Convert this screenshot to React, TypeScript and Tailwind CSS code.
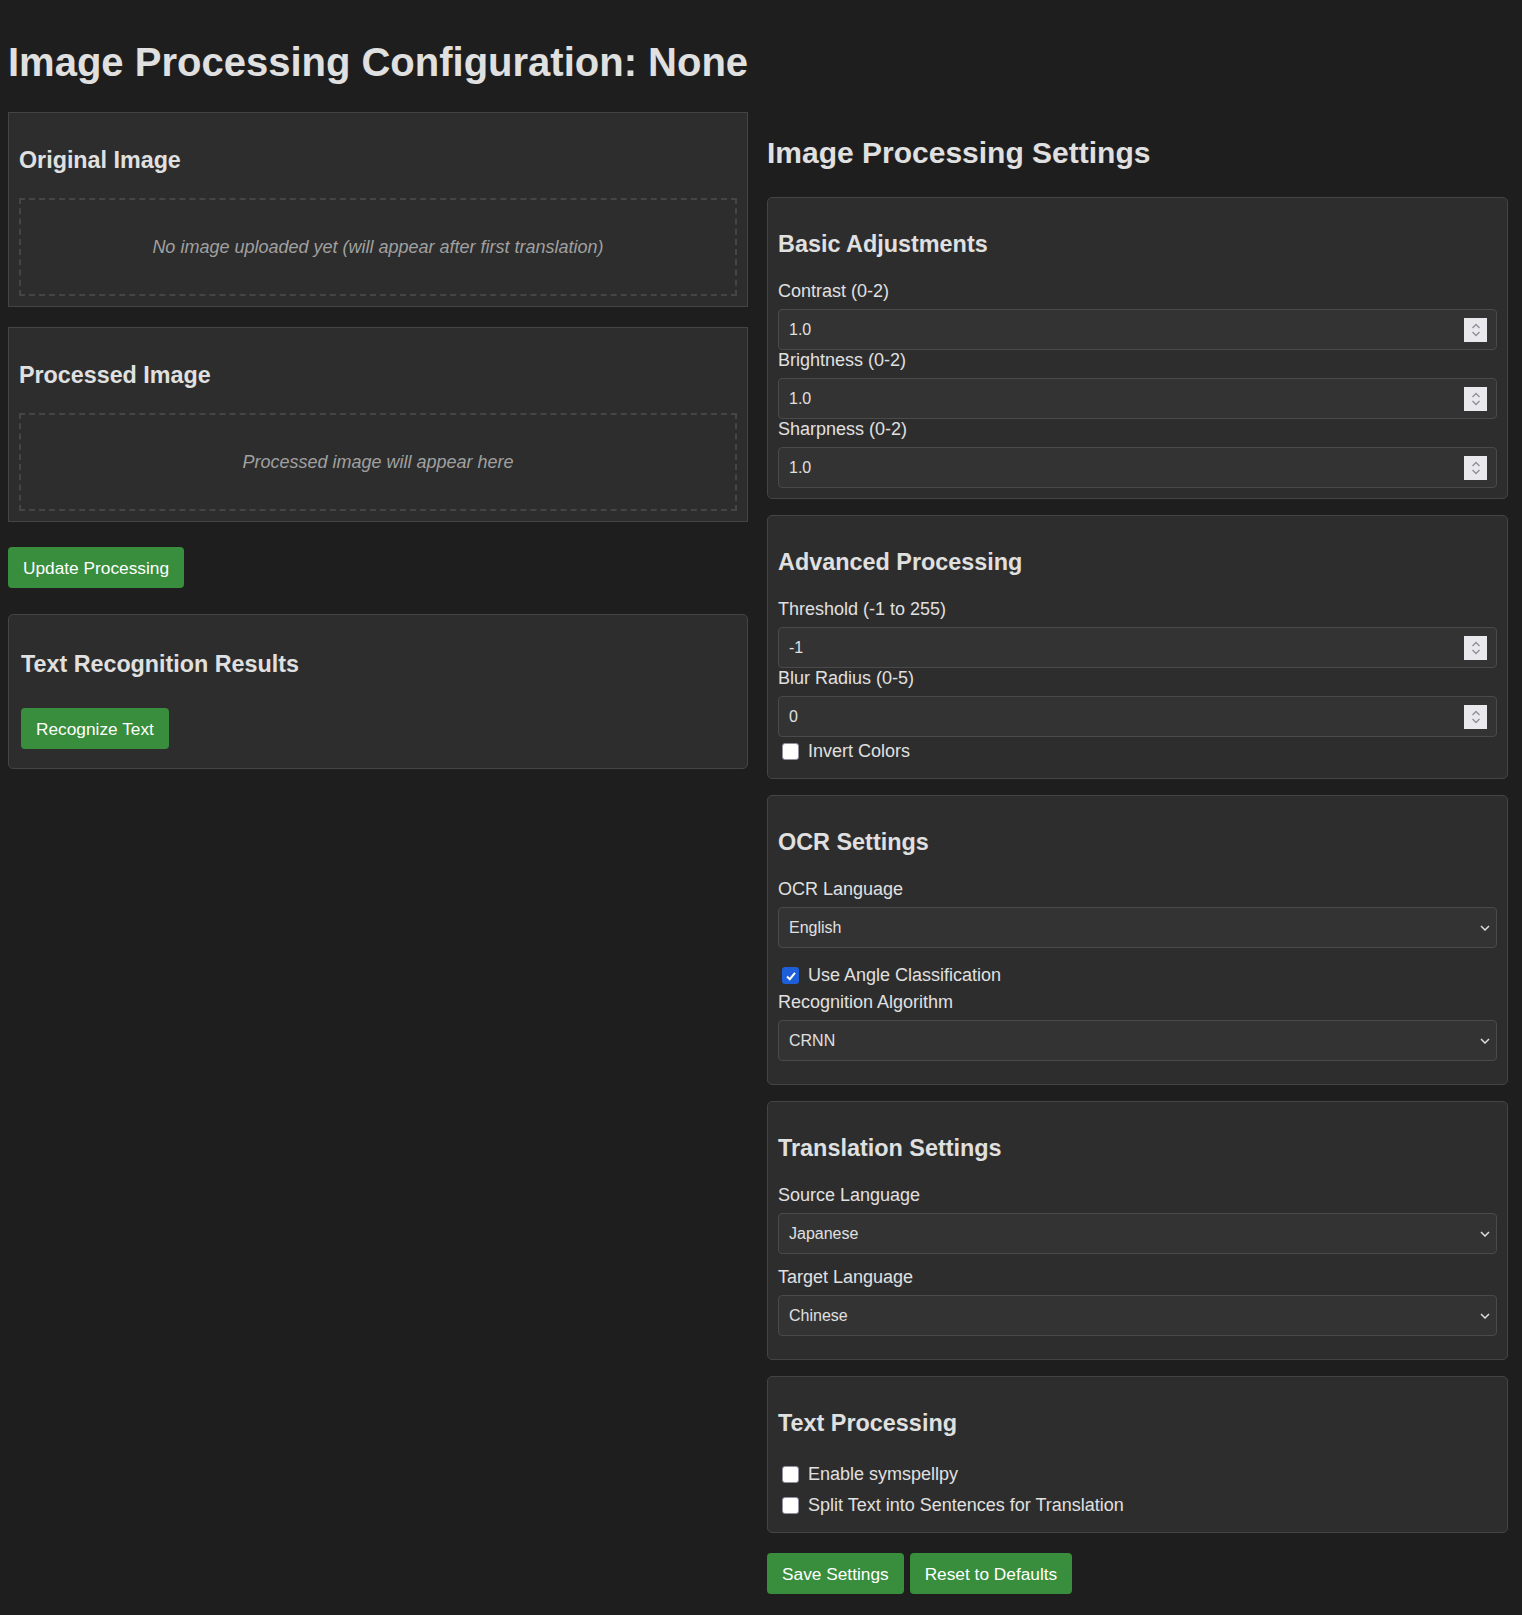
import React from "react";

const LABEL = "block text-[18px] leading-[21px] text-[#e0e0e0]";
const PANEL = "rounded-[5px] border border-[#444444] bg-[#2d2d2d] px-[10px] py-[10px]";
const H3 = "mt-[23px] mb-[23px] text-[23.4px] font-bold leading-[27px] text-[#e0e0e0]";
const BUTTON =
  "h-[41px] rounded-[4px] bg-[#388e3c] px-[15px] text-[17.3px] leading-[20px] text-white";

function Spinner() {
  return (
    <span className="mr-[9px] flex h-[24px] w-[23px] items-center justify-center bg-[#e9e9ed]">
      <svg width="10" height="16" viewBox="0 0 10 16" fill="none">
        <path d="M1.5 6 L5 2.5 L8.5 6" stroke="#8f8f9d" strokeWidth="1.4" />
        <path d="M1.5 10 L5 13.5 L8.5 10" stroke="#8f8f9d" strokeWidth="1.4" />
      </svg>
    </span>
  );
}

function NumberField({ label, value }: { label: string; value: string }) {
  return (
    <div>
      <label className={`${LABEL} mb-[7px]`}>{label}</label>
      <div className="flex h-[41px] items-center rounded-[4px] border border-[#4a4a4a] bg-[#333333]">
        <input
          type="text"
          readOnly
          value={value}
          className="min-w-0 flex-1 bg-transparent pl-[10px] text-[16px] text-[#e0e0e0] outline-none"
        />
        <Spinner />
      </div>
    </div>
  );
}

function SelectField({ label, value }: { label: string; value: string }) {
  return (
    <div className="pb-[13px]">
      <label className={`${LABEL} mb-[7px]`}>{label}</label>
      <div className="relative">
        <select
          defaultValue={value}
          className="h-[41px] w-full appearance-none rounded-[4px] border border-[#4a4a4a] bg-[#333333] pl-[10px] text-[16px] text-[#e0e0e0] outline-none"
        >
          <option>{value}</option>
        </select>
        <svg
          className="pointer-events-none absolute right-[7px] top-1/2 -translate-y-1/2"
          width="10"
          height="6"
          viewBox="0 0 10 6"
          fill="none"
        >
          <path d="M1 1 L5 5 L9 1" stroke="#dddddd" strokeWidth="1.5" />
        </svg>
      </div>
    </div>
  );
}

function Checkbox({ label, checked = false }: { label: string; checked?: boolean }) {
  return (
    <div className="pt-[4px] pb-[6px]">
      <div className="flex h-[21px] items-center gap-[9px] pl-[4px]">
        {checked ? (
          <span className="flex size-[17px] items-center justify-center rounded-[3px] bg-[#1c5fd8]">
            <svg width="12" height="12" viewBox="0 0 12 12" fill="none">
              <path d="M2 6.5 L4.8 9.2 L10 2.8" stroke="#ffffff" strokeWidth="2" />
            </svg>
          </span>
        ) : (
          <span className="size-[17px] rounded-[3px] border border-[#8f8f9d] bg-white" />
        )}
        <span className="text-[18px] leading-[21px] text-[#e0e0e0]">{label}</span>
      </div>
    </div>
  );
}

function ImagePanel({ title, placeholder }: { title: string; placeholder: string }) {
  return (
    <div className="border border-[#444444] bg-[#2d2d2d] p-[10px]">
      <h2 className="mt-[24px] mb-[24px] text-[23.3px] font-bold leading-[27px] text-[#e0e0e0]">
        {title}
      </h2>
      <div className="flex h-[98px] items-center justify-center border-2 border-dashed border-[#454545]">
        <p className="text-[18px] italic text-[#a0a0a0]">{placeholder}</p>
      </div>
    </div>
  );
}

export default function App() {
  return (
    <div className="min-h-screen bg-[#1e1e1e] px-[8px] pt-[8px] pb-[20px] font-['Liberation_Sans',Arial,sans-serif] text-[#e0e0e0]">
      <h1 className="mt-[31px] mb-[27px] text-[40px] font-bold leading-[46px] text-[#e0e0e0]">
        Image Processing Configuration: None
      </h1>

      <div className="flex items-start gap-[19px]">
        {/* Left column */}
        <div className="flex w-[740px] flex-col">
          <ImagePanel
            title="Original Image"
            placeholder="No image uploaded yet (will appear after first translation)"
          />
          <div className="mt-[20px]">
            <ImagePanel title="Processed Image" placeholder="Processed image will appear here" />
          </div>
          <div className="mt-[25px]">
            <button className={BUTTON}>Update Processing</button>
          </div>
          <div className="mt-[26px] rounded-[5px] border border-[#444444] bg-[#2d2d2d] px-[12px] pt-[12px] pb-[19px]">
            <h2 className="mt-[24px] mb-[30px] text-[23.3px] font-bold leading-[27px] text-[#e0e0e0]">
              Text Recognition Results
            </h2>
            <button className={BUTTON}>Recognize Text</button>
          </div>
        </div>

        {/* Right column */}
        <div className="flex w-[741px] flex-col">
          <h2 className="mt-[24px] mb-[27px] text-[30px] font-bold leading-[34px] text-[#e0e0e0]">
            Image Processing Settings
          </h2>

          <div className={PANEL}>
            <h3 className={H3}>Basic Adjustments</h3>
            <NumberField label="Contrast (0-2)" value="1.0" />
            <NumberField label="Brightness (0-2)" value="1.0" />
            <NumberField label="Sharpness (0-2)" value="1.0" />
          </div>

          <div className={`${PANEL} mt-[16px]`}>
            <h3 className={H3}>Advanced Processing</h3>
            <NumberField label="Threshold (-1 to 255)" value="-1" />
            <NumberField label="Blur Radius (0-5)" value="0" />
            <Checkbox label="Invert Colors" />
          </div>

          <div className={`${PANEL} mt-[16px]`}>
            <h3 className={H3}>OCR Settings</h3>
            <SelectField label="OCR Language" value="English" />
            <Checkbox label="Use Angle Classification" checked />
            <SelectField label="Recognition Algorithm" value="CRNN" />
          </div>

          <div className={`${PANEL} mt-[16px]`}>
            <h3 className={H3}>Translation Settings</h3>
            <SelectField label="Source Language" value="Japanese" />
            <SelectField label="Target Language" value="Chinese" />
          </div>

          <div className={`${PANEL} mt-[16px]`}>
            <h3 className={H3}>Text Processing</h3>
            <Checkbox label="Enable symspellpy" />
            <Checkbox label="Split Text into Sentences for Translation" />
          </div>

          <div className="mt-[20px] flex gap-[6px]">
            <button className={BUTTON}>Save Settings</button>
            <button className={BUTTON}>Reset to Defaults</button>
          </div>
        </div>
      </div>
    </div>
  );
}
